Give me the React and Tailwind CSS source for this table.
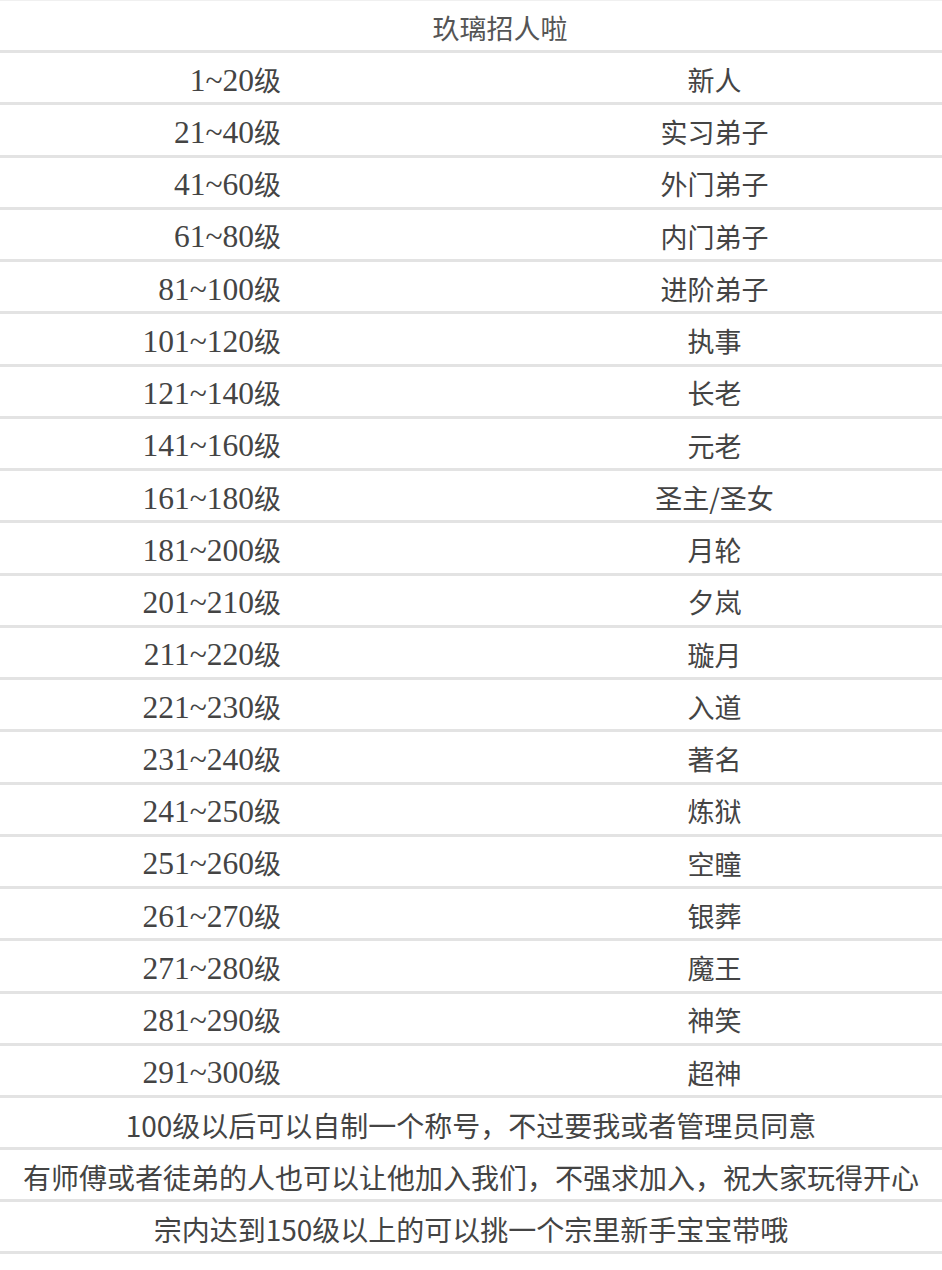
import React from 'react';

const ranks = [
  ['1~20', '新人'],
  ['21~40', '实习弟子'],
  ['41~60', '外门弟子'],
  ['61~80', '内门弟子'],
  ['81~100', '进阶弟子'],
  ['101~120', '执事'],
  ['121~140', '长老'],
  ['141~160', '元老'],
  ['161~180', '圣主/圣女'],
  ['181~200', '月轮'],
  ['201~210', '夕岚'],
  ['211~220', '璇月'],
  ['221~230', '入道'],
  ['231~240', '著名'],
  ['241~250', '炼狱'],
  ['251~260', '空瞳'],
  ['261~270', '银葬'],
  ['271~280', '魔王'],
  ['281~290', '神笑'],
  ['291~300', '超神'],
];

const notes = [
  '100级以后可以自制一个称号，不过要我或者管理员同意',
  '有师傅或者徒弟的人也可以让他加入我们，不强求加入，祝大家玩得开心',
  '宗内达到150级以上的可以挑一个宗里新手宝宝带哦',
];

const cjk = "font-['Noto_Sans_CJK_SC',sans-serif]";

export default function App() {
  return (
    <div className={`w-[942px] min-h-[1270px] bg-white text-[#444] ${cjk}`}>
      <div className="border-t border-[#f0f0f0]">
        {/* header */}
        <div className="h-[52px] border-b-[3px] border-[#e3e3e3] flex items-center justify-center pt-[5px] pl-[58px] text-[27px] text-[#555]">
          玖璃招人啦
        </div>

        {ranks.map(([lv, title]) => (
          <div
            key={lv}
            className="h-[52.25px] border-b-[3px] border-[#e3e3e3] flex items-center pt-[5px] text-[27px]"
          >
            <div className="w-[281px] text-right">
              <span className="font-['Liberation_Serif',serif] text-[31.5px]">{lv}</span>
              <span>级</span>
            </div>
            <div className="flex-1 pl-[206px] text-center">{title}</div>
          </div>
        ))}

        {notes.map((n) => (
          <div
            key={n}
            className="h-[52px] border-b-[3px] border-[#e3e3e3] flex items-center justify-center pt-[5px] text-[28px] whitespace-nowrap"
          >
            {n}
          </div>
        ))}
      </div>
    </div>
  );
}
